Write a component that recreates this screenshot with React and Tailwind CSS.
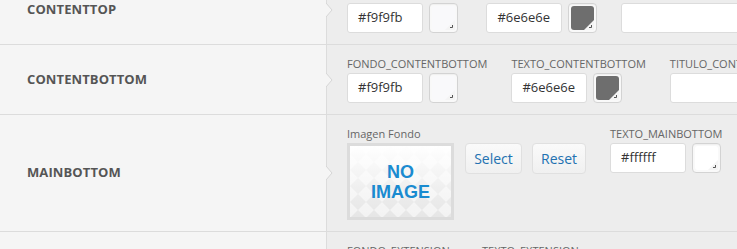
import React from "react";

const font = { fontFamily: '"Open Sans", "Liberation Sans", sans-serif' };

function Swatch({ color }) {
  return (
    <div className="w-[29px] h-[30px] rounded-[4px] border border-[#d3d3d3] bg-[#f9f9f9] p-[2px] shadow-[inset_0_1px_1px_rgba(0,0,0,0.04)]">
      <div className="relative w-full h-full rounded-[3px]" style={{ backgroundColor: color }}>
        <svg className="absolute right-0 bottom-0" width="10" height="10" viewBox="0 0 10 10">
          <path d="M10 0 L10 10 L0 10 Z" fill="#f4f4f4" />
          <path d="M7.5 5 L7.5 7.5 L5 7.5" stroke="#555" strokeWidth="1" fill="none" />
        </svg>
      </div>
    </div>
  );
}

function ColorField({ label, value, color }) {
  return (
    <div className="flex flex-col shrink-0 min-w-[111px]">
      <div className="text-[11px] leading-[15px] text-[#666] mb-[2px] whitespace-nowrap">{label}</div>
      {color !== undefined ? (
        <div className="flex gap-[6px]">
          <div className="w-[76px] h-[30px] bg-white border border-[#dcdcdc] rounded-[3px] pl-[10px] flex items-center text-[13px] text-[#333]">
            {value}
          </div>
          <Swatch color={color} />
        </div>
      ) : (
        <div className="w-[150px] h-[30px] bg-white border border-[#dcdcdc] rounded-[3px]" />
      )}
    </div>
  );
}

function Row({ title, children, className = "" }) {
  return (
    <div className={`flex border-b border-[#dcdcdc] ${className}`}>
      <div className="relative w-[327px] shrink-0 bg-[#f5f5f5] border-r border-[#dcdcdc] flex items-center pl-[27px]">
        <span className="text-[13px] font-bold text-[#555] tracking-[0.1px]">{title}</span>
        <svg className="absolute -right-[7px] top-1/2 -translate-y-1/2" width="7" height="14" viewBox="0 0 7 14">
          <path d="M0 0 L6 7 L0 14" fill="#f5f5f5" stroke="#d6d6d6" strokeWidth="1" />
        </svg>
      </div>
      <div className="flex-1 bg-[#ededed] pl-[20px] pt-[11px] pb-[11px] flex gap-[24px] overflow-hidden">
        {children}
      </div>
    </div>
  );
}

function NoImage() {
  return (
    <div className="relative w-[107px] h-[77px] border-[3px] border-[#dcdcdc] bg-[#f3f3f3] overflow-hidden">
      <svg className="absolute inset-0" width="101" height="71">
        <defs>
          <pattern id="dia" width="16" height="16" patternUnits="userSpaceOnUse">
            <rect width="16" height="16" fill="#f3f3f3" />
            <path d="M8 0 L16 8 L8 16 L0 8 Z" fill="#e6e6e6" />
          </pattern>
          <linearGradient id="fade" x1="0" y1="0" x2="0" y2="1">
            <stop offset="0" stopColor="#ffffff" stopOpacity="1" />
            <stop offset="0.75" stopColor="#ffffff" stopOpacity="0.2" />
            <stop offset="1" stopColor="#ffffff" stopOpacity="0" />
          </linearGradient>
        </defs>
        <rect width="101" height="71" fill="url(#dia)" />
        <rect width="101" height="71" fill="url(#fade)" />
      </svg>
      <div
        className="relative h-full flex flex-col items-center justify-center text-[18px] leading-[20px] font-bold text-[#1a8bd0]"
        style={{ fontFamily: '"Liberation Sans", Arial, sans-serif' }}
      >
        <span>NO</span>
        <span>IMAGE</span>
      </div>
    </div>
  );
}

function Btn({ children, w }) {
  return (
    <button className={`${w} h-[31px] rounded-[4px] border border-[#e0e0e0] bg-gradient-to-b from-[#fafafa] to-[#f0f0f0] text-[14px] text-[#2271b1]`}>
      {children}
    </button>
  );
}

export default function App() {
  return (
    <div className="w-[737px] h-[249px] overflow-hidden bg-[#ededed]" style={font}>
      <div className="-mt-[25px]">
        <Row title="CONTENTTOP">
          <ColorField label="FONDO_CONTENTTOP" value="#f9f9fb" color="#f9f9fb" />
          <ColorField label="TEXTO_CONTENTTOP" value="#6e6e6e" color="#6e6e6e" />
          <ColorField label="TITULO_CONTENTTOP" />
        </Row>
        <Row title="CONTENTBOTTOM">
          <ColorField label="FONDO_CONTENTBOTTOM" value="#f9f9fb" color="#f9f9fb" />
          <ColorField label="TEXTO_CONTENTBOTTOM" value="#6e6e6e" color="#6e6e6e" />
          <ColorField label="TITULO_CONTENTBOTTOM" />
        </Row>
        <Row title="MAINBOTTOM">
          <div className="flex flex-col shrink-0">
            <div className="text-[11px] leading-[15px] text-[#666] mb-[2px]">Imagen Fondo</div>
            <div className="flex items-start">
              <NoImage />
              <div className="ml-[11px]">
                <Btn w="w-[57px]">Select</Btn>
              </div>
              <div className="ml-[10px]">
                <Btn w="w-[54px]">Reset</Btn>
              </div>
            </div>
          </div>
          <ColorField label="TEXTO_MAINBOTTOM" value="#ffffff" color="#ffffff" />
        </Row>
        <Row title="">
          <ColorField label="FONDO_EXTENSION" value="#ffffff" color="#ffffff" />
          <ColorField label="TEXTO_EXTENSION" value="#333333" color="#333333" />
        </Row>
      </div>
    </div>
  );
}
